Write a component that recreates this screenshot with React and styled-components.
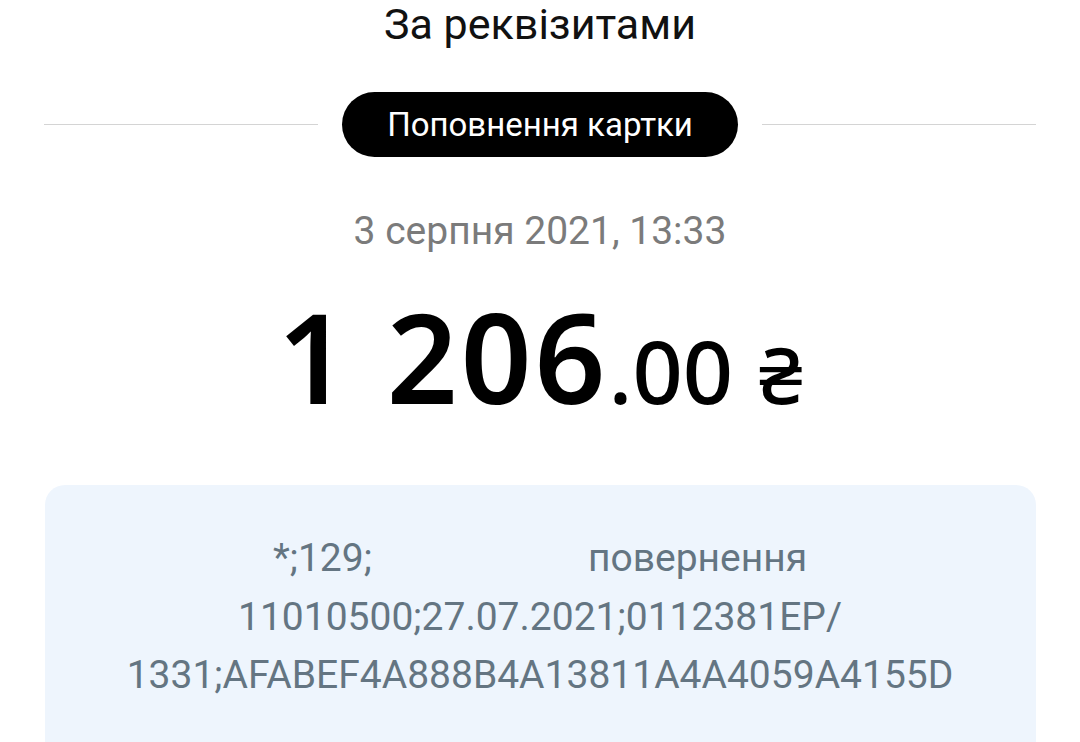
import styled, { createGlobalStyle } from "styled-components";

const GlobalStyle = createGlobalStyle`
  html, body {
    margin: 0;
    padding: 0;
    background: #ffffff;
  }
  body {
    font-family: Roboto, "Noto Sans", sans-serif;
    overflow: hidden;
  }
`;

const Page = styled.div`
  width: 1080px;
  height: 742px;
  display: flex;
  flex-direction: column;
  align-items: center;
  overflow: hidden;
`;

const Title = styled.div`
  font-size: 43px;
  line-height: 48px;
  color: #111111;
`;

const DividerRow = styled.div`
  width: 992px;
  margin-top: 44px;
  display: flex;
  align-items: center;
  gap: 24px;
`;

const Line = styled.div`
  flex: 1;
  height: 1.5px;
  background: #d4d4d4;
`;

const Pill = styled.div`
  height: 65px;
  padding: 0 45px;
  border-radius: 33px;
  background: #000000;
  color: #ffffff;
  display: flex;
  align-items: center;
  font-size: 33px;
`;

const DateText = styled.div`
  margin-top: 51px;
  font-size: 39px;
  line-height: 46px;
  color: #7b7b7b;
`;

const Amount = styled.div`
  margin-top: 40px;
  display: flex;
  align-items: baseline;
  font-family: "Noto Sans", "Open Sans", sans-serif;
  color: #000000;
  line-height: 1;
`;

const Whole = styled.span`
  font-size: 124px;
  font-weight: 600;
  letter-spacing: 3px;
`;

const Cents = styled.span`
  font-size: 88px;
  font-weight: 500;
`;

const Currency = styled.span`
  font-size: 78px;
  font-weight: 500;
  margin-left: 26px;
`;

const Card = styled.div`
  width: 991px;
  margin-top: 67px;
  padding: 44px 0 60px;
  border-radius: 20px;
  background: #eef5fd;
  display: flex;
  flex-direction: column;
  align-items: center;
`;

const CardLine = styled.div`
  font-size: 39px;
  line-height: 58.5px;
  color: #647582;
  white-space: nowrap;
`;

const Hidden = styled.span`
  display: inline-block;
  width: ${(p) => p.w}px;
`;

export default function App() {
  return (
    <Page>
      <GlobalStyle />
      <Title>За реквізитами</Title>
      <DividerRow>
        <Line />
        <Pill>Поповнення картки</Pill>
        <Line />
      </DividerRow>
      <DateText>3 серпня 2021, 13:33</DateText>
      <Amount>
        <Whole>1 206</Whole>
        <Cents>.00</Cents>
        <Currency>₴</Currency>
      </Amount>
      <Card>
        <CardLine>
          *;129;<Hidden w={216} />повернення
        </CardLine>
        <CardLine>11010500;27.07.2021;0112381EP/</CardLine>
        <CardLine>1331;AFABEF4A888B4A13811A4A4059A4155D</CardLine>
      </Card>
    </Page>
  );
}
